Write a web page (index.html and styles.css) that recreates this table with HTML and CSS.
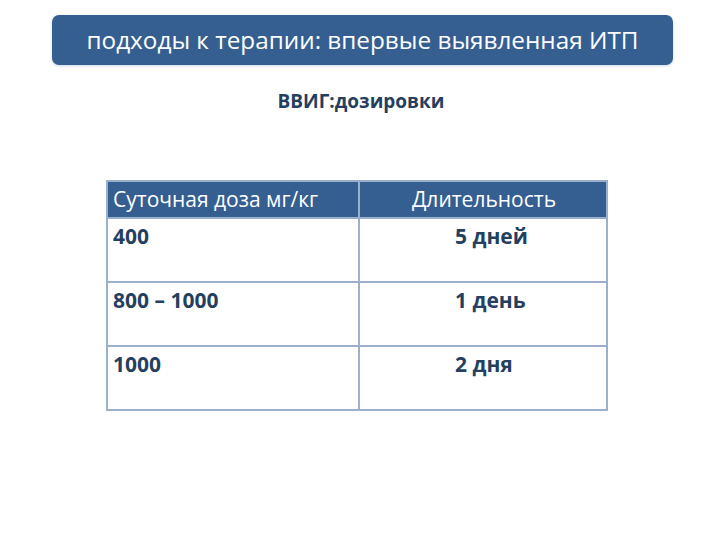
FILE: index.html
```html
<!DOCTYPE html>
<html lang="ru">
<head>
<meta charset="utf-8">
<link rel="stylesheet" href="styles.css">
</head>
<body>
<div class="page">
  <div class="title">подходы к терапии: впервые выявленная ИТП</div>
  <div class="subtitle">ВВИГ:дозировки</div>
  <table class="dose">
    <colgroup><col class="w1"><col class="w2"></colgroup>
    <thead>
      <tr><th class="c1">Суточная доза мг/кг</th><th class="c2">Длительность</th></tr>
    </thead>
    <tbody>
      <tr><td class="c1">400</td><td class="c2">5 дней</td></tr>
      <tr><td class="c1">800 – 1000</td><td class="c2">1 день</td></tr>
      <tr><td class="c1">1000</td><td class="c2">2 дня</td></tr>
    </tbody>
  </table>
</div>
</body>
</html>
```
FILE: styles.css
```css
html, body { margin: 0; padding: 0; background: #ffffff; }
.page {
  width: 720px; height: 540px;
  font-family: "Open Sans", "Noto Sans", sans-serif;
  padding-top: 15px;
  box-sizing: border-box;
}
.title {
  margin: 0 47px 0 52px;
  height: 50px;
  background: #365f91;
  border-radius: 7px;
  color: #ffffff;
  font-size: 24.3px;
  line-height: 50px;
  text-align: center;
  box-shadow: 0 1px 3px rgba(54,95,145,0.25);
}
.subtitle {
  margin-top: 24px;
  text-align: center;
  font-weight: bold;
  font-size: 19px;
  color: #243f60;
  line-height: 24px;
  padding-left: 2px;
}
.dose {
  margin: 67px 0 0 106px;
  width: 500px;
  table-layout: fixed;
  border-collapse: collapse;
  border: 2px solid #9bb0cc;
}
.dose .w1 { width: 252px; }
.dose .w2 { width: 248px; }
.dose th, .dose td {
  border: 2px solid #9bb0cc;
  padding: 0;
  vertical-align: top;
  text-align: left;
  white-space: nowrap;
}
.dose th {
  background: #365f91;
  color: #ffffff;
  font-weight: normal;
  font-size: 21px;
  height: 35px;
  line-height: 35px;
}
.dose td {
  height: 60px;
  font-weight: bold;
  font-size: 21px;
  color: #243f60;
  line-height: 30px;
  padding-top: 2px;
}
.dose .c1 { padding-left: 5px; }
.dose th.c2 { padding-left: 52px; }
.dose td.c2 { padding-left: 95px; }
```
